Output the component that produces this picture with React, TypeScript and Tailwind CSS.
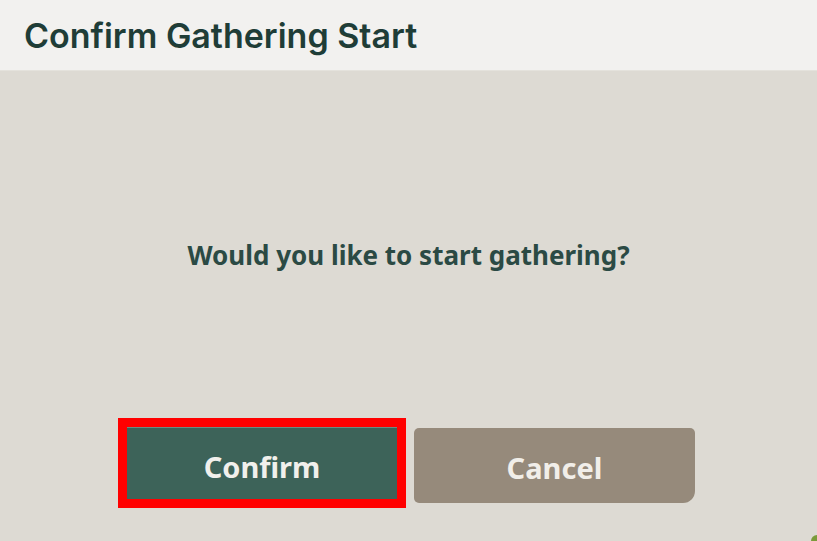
export default function App() {
  return (
    <div className="w-[817px] h-[541px] overflow-hidden flex flex-col bg-[#dddad3] relative">
      <header className="h-[71px] shrink-0 bg-[#f2f1ef] flex items-center px-6 border-b border-[#e4e2dc]">
        <h1
          className="text-[34px] font-semibold text-[#1f3d37] leading-none pt-[2px]"
          style={{ fontFamily: "Inter, 'Noto Sans', sans-serif" }}>
          Confirm Gathering Start
        </h1>
      </header>
      <main
        className="flex-1 flex flex-col items-center"
        style={{ fontFamily: "'Noto Sans', 'Open Sans', sans-serif" }}>
        <p className="mt-[164px] text-[26px] font-bold text-[#2b4a44] leading-[40px]">
          Would you like to start gathering?
        </p>
        <div className="mt-[143px] flex items-start gap-2 mr-[4px]">
          <div className="border-[9px] border-[#ff0000] w-[288px] h-[90px]">
            <button className="w-full h-full bg-[#3d6359] border-t border-[#6c8c83] text-[29px] font-bold text-[#f1f0ec] flex items-center justify-center pt-[6px]">
              Confirm
            </button>
          </div>
          <button className="mt-[10px] w-[281px] h-[75px] bg-[#968a7b] rounded-[5px] rounded-br-[12px] text-[29px] font-bold text-[#f1eee9] flex items-center justify-center pt-[4px]">
            Cancel
          </button>
        </div>
      </main>
      <div className="absolute right-0 bottom-0 w-[6px] h-[6px] bg-[#7a9a3a] rounded-tl-full" />
    </div>
  );
}
